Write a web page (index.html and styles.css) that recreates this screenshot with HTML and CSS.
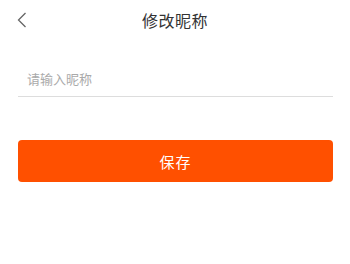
FILE: index.html
```html
<!DOCTYPE html>
<html lang="zh-CN">
<head>
    <meta charset="UTF-8">
    <meta name="viewport" content="width=device-width, initial-scale=1.0">
    <title>修改昵称</title>
    <link rel="stylesheet" href="styles.css">
</head>
<body>
    <div class="nav-bar">
        <span class="back">
            <svg width="10" height="16" viewBox="0 0 10 16">
                <path d="M8.5 1 L1.5 8 L8.5 15" fill="none" stroke="#666" stroke-width="1.3"/>
            </svg>
        </span>
        <h1 class="title">修改昵称</h1>
    </div>

    <div class="form">
        <div class="field">
            <input class="nickname" type="text" placeholder="请输入昵称">
        </div>
        <button class="save-btn">保存</button>
    </div>
</body>
</html>
```

FILE: styles.css
```css
body {
    margin: 0;
    font-family: "Noto Sans CJK SC", "Liberation Sans", sans-serif;
    background: #fff;
    width: 350px;
}

.nav-bar {
    position: relative;
    height: 40px;
    display: flex;
    align-items: center;
    justify-content: center;
}

.back {
    position: absolute;
    left: 17px;
    top: 12px;
    display: flex;
}

.title {
    margin: 0;
    font-size: 16px;
    font-weight: normal;
    color: #333;
    letter-spacing: 0.5px;
}

.form {
    padding: 0 17px 0 18px;
}

.field {
    margin-top: 20px;
    border-bottom: 1px solid #ddd;
    height: 36px;
    display: flex;
    align-items: center;
}

.nickname {
    border: none;
    outline: none;
    padding: 0 0 0 9px;
    width: 100%;
    font-size: 13px;
    font-family: inherit;
    color: #333;
    background: transparent;
}

.nickname::placeholder {
    color: #aaa;
}

.save-btn {
    display: block;
    width: 100%;
    height: 42px;
    margin-top: 43px;
    border: none;
    border-radius: 4px;
    background: #ff5000;
    color: #fff;
    font-size: 15px;
    font-family: inherit;
    letter-spacing: 1px;
}
```
